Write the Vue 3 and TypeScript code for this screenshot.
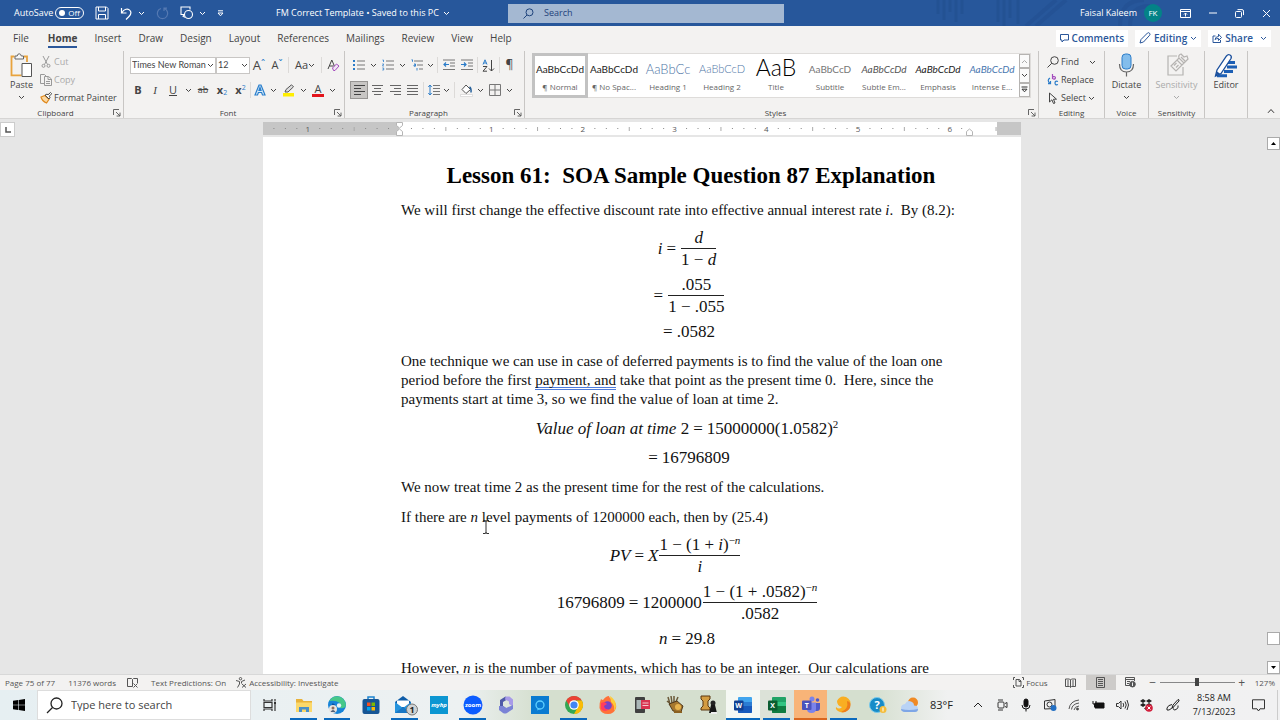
<script setup lang="ts">
import { h, ref } from 'vue'

const Chevron = () =>
  h('svg', { class: 'chev', width: 7, height: 5, viewBox: '0 0 7 5', fill: 'none', stroke: 'currentColor' }, [
    h('path', { d: 'M1 1l2.5 2.5L6 1' }),
  ])
const Launcher = () =>
  h('svg', { width: 8, height: 8, viewBox: '0 0 8 8', fill: 'none', stroke: '#555', 'stroke-width': 0.9 }, [
    h('path', { d: 'M.5 6V.5H6M3 3l4 4M7 3.6V7H3.6' }),
  ])

const tabs = ['File', 'Home', 'Insert', 'Draw', 'Design', 'Layout', 'References', 'Mailings', 'Review', 'View', 'Help']
const styles = [
  { sample: 'AaBbCcDd', name: '¶ Normal', kind: 'normal' },
  { sample: 'AaBbCcDd', name: '¶ No Spac...', kind: 'normal' },
  { sample: 'AaBbCc', name: 'Heading 1', kind: 'h1' },
  { sample: 'AaBbCcD', name: 'Heading 2', kind: 'h2' },
  { sample: 'AaB', name: 'Title', kind: 'title' },
  { sample: 'AaBbCcD', name: 'Subtitle', kind: 'sub' },
  { sample: 'AaBbCcDd', name: 'Subtle Em...', kind: 'subtle' },
  { sample: 'AaBbCcDd', name: 'Emphasis', kind: 'emph' },
  { sample: 'AaBbCcDd', name: 'Intense E...', kind: 'intense' },
]
const apps = [
  { id: 'taskview', label: 'Task View' },
  { id: 'explorer', label: 'File Explorer', run: true },
  { id: 'edge', label: 'Microsoft Edge', run: true },
  { id: 'store', label: 'Microsoft Store' },
  { id: 'mail', label: 'Mail', run: true },
  { id: 'hp', label: 'myHP' },
  { id: 'zoom', label: 'Zoom', run: true },
  { id: 'm365', label: 'Microsoft 365' },
  { id: 'alexa', label: 'Alexa' },
  { id: 'chrome', label: 'Chrome', run: true },
  { id: 'firefox', label: 'Firefox' },
  { id: 'phone', label: 'Phone' },
  { id: 'claw', label: 'Game' },
  { id: 'chess', label: 'Chess' },
  { id: 'word', label: 'Word', run: true },
  { id: 'excel', label: 'Excel', run: true },
  { id: 'teams', label: 'Teams', run: true },
  { id: 'swirl', label: 'Browser', run: true },
  { id: 'help', label: 'Get Help' },
]
const inch = 91.7
const origin = 136.5
const ticks: { x: number; kind: 'dot' | 'half' | 'num'; n: number }[] = []
for (let i = -11; i <= 52; i++) {
  if (i === 0 || i === 50 || i === 51) continue
  const kind = i % 8 === 0 ? 'num' : i % 4 === 0 ? 'half' : 'dot'
  ticks.push({ x: origin + (i * inch) / 8, kind, n: Math.abs(i / 8) })
}
const zoom = ref(50)
const find = ref('')
const query = ref('')
</script>

<template>
  <div class="app">
    <header class="titlebar">
      <svg class="art" width="240" height="26" viewBox="0 0 240 26" fill="none">
        <path d="M8 0v14M14 0v20M20 0v12M26 0v22M32 0v14M68 0v22M74 0v26M80 0v18M88 0v24" stroke="#1f4a88" stroke-width="3" opacity=".4" />
        <path d="M96 26l30-26M106 26l30-26M190 26q0-26 24-26M200 26q0-20 20-20" stroke="#1f4a88" stroke-width="4" opacity=".3" />
      </svg>
      <div class="quick">
        <label class="autosave">AutoSave
          <input type="checkbox" role="switch" /><span class="toggle"><i></i>Off</span>
        </label>
        <button aria-label="Save"><svg width="14" height="14" viewBox="0 0 14 14" fill="none" stroke="#fff"><path d="M1 1h10.5L13 2.500V13H1zM3.500 1v4h7V1M3.500 13V8.500h7V13" /></svg></button>
        <button aria-label="Undo" class="undo"><svg width="13" height="13" viewBox="0 0 13 13" fill="none" stroke="#fff" stroke-width="1.200"><path d="M1.500 1v5h5M1.800 5.800C4 2 8 1 10 3.500s1 4-1 6L6 12.500" /></svg><Chevron /></button>
        <button aria-label="Repeat" class="dim"><svg width="13" height="13" viewBox="0 0 13 13" fill="none" stroke="#5579b2" stroke-width="1.200"><path d="M5 1.500A5.200 5.200 0 1 0 8 1.500M8 4V1.200h3" /></svg></button>
        <button aria-label="Shapes" class="undo"><svg width="14" height="14" viewBox="0 0 14 14" fill="none" stroke="#fff" stroke-width="1.100"><path d="M4 8.500H1V1h9v2.500M4 8.500l-1 1.800 2 1" /><circle cx="8.500" cy="8.500" r="4" /></svg><Chevron /></button>
        <button aria-label="Customize toolbar"><svg width="7" height="7" viewBox="0 0 7 7" fill="none" stroke="#fff"><path d="M1 .8h5M1 3h5L3.500 5.800z" /></svg></button>
      </div>
      <button class="docname">FM Correct Template • Saved to this PC <Chevron /></button>
      <label class="tsearch">
        <svg width="11" height="11" viewBox="0 0 11 11" fill="none" stroke="#1f437c"><circle cx="6.500" cy="4.300" r="3.500" /><path d="M4 7L.5 10.500" /></svg>
        <input v-model="find" placeholder="Search" aria-label="Search document" />
      </label>
      <div class="account">
        <span>Faisal Kaleem</span><b class="avatar">FK</b>
        <button aria-label="Ribbon display options"><svg width="11" height="9" viewBox="0 0 11 9" fill="none" stroke="#fff"><path d="M.5.500h10v8H.500zM.5 2.500h10M5.500 7.500V4M4 5.500L5.500 4 7 5.500" /></svg></button>
        <button aria-label="Minimize"><svg width="8" height="8" viewBox="0 0 8 8" stroke="#fff"><path d="M0 4h8" /></svg></button>
        <button aria-label="Restore"><svg width="9" height="9" viewBox="0 0 9 9" fill="none" stroke="#fff"><rect x=".5" y="2.500" width="6" height="6" rx="1" /><path d="M2.500.6H7q1.500 0 1.500 1.500v4" /></svg></button>
        <button aria-label="Close"><svg width="9" height="9" viewBox="0 0 9 9" stroke="#fff"><path d="M1 1l7 7M8 1L1 8" /></svg></button>
      </div>
    </header>

    <nav class="tabs">
      <button v-for="t in tabs" :key="t" :class="{ on: t === 'Home' }">{{ t }}</button>
      <div class="actions">
        <button><svg width="9" height="9" viewBox="0 0 9 9" fill="none" stroke="#2b579a"><path d="M.5.500h8v5.500H4L2 8V6H.500z" /></svg>Comments</button>
        <button><svg width="12" height="12" viewBox="0 0 12 12" fill="none" stroke="#2b579a"><path d="M1 11l1-3.500L8.500 1q1-.8 2 .2t.2 2L4.500 10z" /></svg>Editing <Chevron /></button>
        <button><svg width="10" height="10" viewBox="0 0 10 10" fill="none" stroke="#2b579a"><path d="M3.500 3H1v6.500h7.500V7M3 6.500q.5-3 3.500-3V1.200L9.500 4.500l-3 3V5.500Q4.500 5.400 3 6.500z" /></svg>Share <i class="split"></i><Chevron /></button>
      </div>
    </nav>

    <section class="ribbon">
      <div class="group g-clip">
        <div class="body clip">
          <button class="big">
            <svg width="23" height="25" viewBox="0 0 23 25" fill="none"><path d="M4.500 3.500h-3v18.800h10" stroke="#e8a33d" stroke-width="1.800" /><path d="M14 3.500h3V9" stroke="#e8a33d" stroke-width="1.800" /><path d="M5 5V3h2.200Q7.500.8 9.200.8T11.300 3h2.200v3H5z" stroke="#666" fill="#f8f8f8" /><path d="M12 10.500h9.500v13H12z" stroke="#555" fill="#fff" /></svg>
            Paste<Chevron />
          </button>
          <div class="stack">
            <button class="off"><svg width="12" height="12" viewBox="0 0 12 12" fill="none" stroke="#999"><path d="M3 0l4.500 8.500M9 0L4.500 8.500" /><circle cx="3.500" cy="9.800" r="1.500" /><circle cx="8.500" cy="9.800" r="1.500" /></svg>Cut</button>
            <button class="off"><svg width="12" height="12" viewBox="0 0 12 12" fill="none" stroke="#999"><path d="M4 9.500H.500V.5h4L6 2M4.500 2.500h4L11.500 5v6.500h-7zM8 2.500V5.500h3M6 7.500h4M6 9.500h4" /></svg>Copy</button>
            <button><svg width="12" height="12" viewBox="0 0 12 12" fill="none"><path d="M1 5l4-1.500 4 3.800L6.500 11Q2 9 1 5z" fill="#fbd9a4" stroke="#e08a1e" stroke-width="1.200" /><path d="M5 3.200L7 2l1 .8L10.500.5l1.200 1.200L9.300 4.200l.8 1L9 7z" fill="#fff" stroke="#444" /></svg>Format Painter</button>
          </div>
        </div>
        <footer><span>Clipboard</span><button aria-label="Clipboard options"><Launcher /></button></footer>
      </div>

      <div class="group g-font">
        <div class="body rows">
          <div class="row f1">
            <span class="sel"><select aria-label="Font"><option>Times New Roman</option></select><Chevron /></span>
            <span class="sel"><select aria-label="Font size"><option>12</option></select><Chevron /></span>
            <button class="lg">A<sup class="blu">ˆ</sup></button>
            <button class="md">A<sup class="blu">ˇ</sup></button>
            <i class="sep"></i>
            <button class="md">Aa <Chevron /></button>
            <i class="sep"></i>
            <button aria-label="Clear formatting"><svg width="13" height="13" viewBox="0 0 13 13" fill="none"><path d="M1 10L4.800 1l3 7M2.400 7h4.200" stroke="#444" /><path d="M5.500 9l4-4 2.500 2-4 4.500H6.500z" fill="#f1e5f6" stroke="#a44bbd" /></svg></button>
          </div>
          <div class="row f2">
            <button class="md"><b>B</b></button><button class="md ser"><i>I</i></button><button class="md"><u>U</u></button><button aria-label="Underline styles"><Chevron /></button>
            <button><s>ab</s></button><button class="md"><b>x</b><sub class="blu">2</sub></button><button class="md"><b>x</b><sup class="blu">2</sup></button><i class="sep"></i>
            <button aria-label="Text effects"><svg width="12" height="12" viewBox="0 0 12 12" fill="none" stroke="#2a7fcc"><path d="M1 11L5 1h2l4 10H8.500L7.600 8.500H4.400L3.500 11zM5 6.500h2L6 3.500z" fill="#d6eaf9" stroke-width="1.200" /></svg></button><button aria-label="Effects menu"><Chevron /></button>
            <button aria-label="Highlight"><svg width="13" height="13" viewBox="0 0 13 13"><path d="M3 8l1-2.500L9.500.8l2 2L6 8z" fill="#ddd" stroke="#555" /><path d="M1 9h11v3.500H1z" fill="#ffee00" /></svg></button><button aria-label="Highlight colors"><Chevron /></button>
            <button class="md fontcolor">A</button><button aria-label="Font colors"><Chevron /></button>
          </div>
        </div>
        <footer><span>Font</span><button aria-label="Font options"><Launcher /></button></footer>
      </div>

      <div class="group g-para">
        <div class="body rows">
          <div class="row p1">
            <button aria-label="Bullets"><svg width="12" height="12" viewBox="0 0 12 12"><path d="M4 2h8M4 6h8M4 10h8" stroke="#777" /><path d="M0 2h2M0 6h2M0 10h2" stroke="#2b7cc9" stroke-width="2" /></svg></button><button aria-label="Bullet library"><Chevron /></button>
            <button aria-label="Numbering"><svg width="12" height="12" viewBox="0 0 12 12" fill="none"><path d="M4 2h8M4 6h8M4 10h8" stroke="#777" /><path d="M.5 1h1v2M.3 5h1.400L.5 7h1.300M.3 9h1.400v2H.3" stroke="#2b7cc9" stroke-width=".8" /></svg></button><button aria-label="Number library"><Chevron /></button>
            <button aria-label="Multilevel list"><svg width="12" height="12" viewBox="0 0 12 12" fill="none"><path d="M3 2h9M6 6h6M8 10h4" stroke="#777" /><path d="M.5.800h1v2M3 5h1.500v2.200H3V6h1.500M6 9v2.500" stroke="#2b7cc9" stroke-width=".9" /></svg></button><button aria-label="List library"><Chevron /></button>
            <i class="sep"></i>
            <button aria-label="Decrease indent"><svg width="12" height="12" viewBox="0 0 12 12" fill="none"><path d="M0 1h12M7 4h5M7 7h5M0 10.500h12" stroke="#777" /><path d="M6 5.500H1M3 3.500l-2 2 2 2" stroke="#2b7cc9" stroke-width="1.200" /></svg></button>
            <button aria-label="Increase indent"><svg width="12" height="12" viewBox="0 0 12 12" fill="none"><path d="M0 1h12M7 4h5M7 7h5M0 10.500h12" stroke="#777" /><path d="M0 5.500h5M3 3.500l2 2-2 2" stroke="#2b7cc9" stroke-width="1.200" /></svg></button>
            <i class="sep"></i>
            <button aria-label="Sort"><svg width="13" height="13" viewBox="0 0 13 13" fill="none"><path d="M1 5.500L3 .8l2 4.700M1.700 4h2.600" stroke="#2b7cc9" /><path d="M1 7.500h4l-4 4.700h4M9.500 1v11M7 9.500l2.500 2.500L12 9.500" stroke="#444" /></svg></button>
            <i class="sep"></i>
            <button class="pil">¶</button>
          </div>
          <div class="row p2">
            <button aria-label="Align left" class="picked"><svg width="11" height="12" viewBox="0 0 11 12" stroke="#444"><path d="M0 1.500h11M0 4.500h7M0 7.500h11M0 10.500h7" /></svg></button>
            <button aria-label="Center"><svg width="11" height="12" viewBox="0 0 11 12" stroke="#666"><path d="M0 1.500h11M2 4.500h7M0 7.500h11M2 10.500h7" /></svg></button>
            <button aria-label="Align right"><svg width="11" height="12" viewBox="0 0 11 12" stroke="#666"><path d="M0 1.500h11M4 4.500h7M0 7.500h11M4 10.500h7" /></svg></button>
            <button aria-label="Justify"><svg width="11" height="12" viewBox="0 0 11 12" stroke="#666"><path d="M0 1.500h11M0 4.500h11M0 7.500h11M0 10.500h11" /></svg></button>
            <i class="sep"></i>
            <button aria-label="Line spacing"><svg width="12" height="12" viewBox="0 0 12 12" fill="none"><path d="M5 1.500h7M5 4.500h7M5 7.500h7M5 10.500h7" stroke="#777" /><path d="M2 1v10M.3 3L2 1l1.700 2M.3 9L2 11l1.700-2" stroke="#2b7cc9" /></svg></button><button aria-label="Spacing menu"><Chevron /></button>
            <i class="sep"></i>
            <button aria-label="Shading"><svg width="13" height="13" viewBox="0 0 13 13" fill="none"><path d="M2 5.500L6 1l4.500 4.500L6 9.500z" fill="#fff" stroke="#555" /><path d="M9.500 3q2 1 1.500 5.500" stroke="#26619c" stroke-width="1.500" /><path d="M.5 10.500h12v2H.500z" fill="#fff" stroke="#ccc" stroke-width=".6" /></svg></button><button aria-label="Shading colors"><Chevron /></button>
            <button aria-label="Borders"><svg width="12" height="12" viewBox="0 0 12 12" fill="none" stroke="#777"><path d="M.5.500h11v11H.500zM6 .5v11M.5 6h11" /></svg></button><button aria-label="Border menu"><Chevron /></button>
          </div>
        </div>
        <footer><span>Paragraph</span><button aria-label="Paragraph options"><Launcher /></button></footer>
      </div>

      <div class="group g-styles">
        <div class="body gal">
          <button v-for="(s, i) in styles" :key="s.name" class="style" :class="{ cur: i === 0 }"><span class="sample" :class="s.kind">{{ s.sample }}</span><small>{{ s.name }}</small></button>
          <div class="scr">
            <button aria-label="Scroll styles up" class="up"><svg width="7" height="5" viewBox="0 0 7 5" fill="none" stroke="currentColor"><path d="M1 4l2.500-2.500L6 4" /></svg></button><button aria-label="Scroll styles down"><Chevron /></button>
            <button aria-label="More styles"><svg width="7" height="7" viewBox="0 0 7 7" fill="none" stroke="#333"><path d="M.5 1h6M1 3.200h5L3.500 5.800z" /></svg></button>
          </div>
        </div>
        <footer><span>Styles</span><button aria-label="Styles options"><Launcher /></button></footer>
      </div>

      <div class="group g-edit">
        <div class="body stack">
          <button><svg width="12" height="12" viewBox="0 0 12 12" fill="none" stroke="#444"><circle cx="7.500" cy="4.500" r="3.800" /><path d="M4.800 7.200L.5 11.500" /></svg>Find<Chevron class="wide" /></button>
          <button><svg width="12" height="12" viewBox="0 0 12 12" fill="none" stroke-width="1.200"><path d="M5.500 0v5M5.500 3.500a1.500 1.300 0 1 1 0 .6" stroke="#a44bbd" /><path d="M3 4Q-.5 6 3 9.500M3.500 7v2.700H1M11 7.500q-3-1-3 1.500t3 1.500" stroke="#2b7cc9" /></svg>Replace</button>
          <button><svg width="12" height="12" viewBox="0 0 12 12" fill="none" stroke="#444"><path d="M2.500 1v9l2.400-2.200L6.500 11.500 8 11 6.500 7.200H9.500z" /></svg>Select<Chevron /></button>
        </div>
        <footer><span>Editing</span></footer>
      </div>
      <div class="group g-voice">
        <div class="body"><button class="big">
          <svg width="17" height="25" viewBox="0 0 17 25" fill="none"><rect x="4" y="1" width="9" height="15" rx="3.500" fill="#83bdec" stroke="#2b7cc9" /><path d="M1.500 11q0 8 7 8t7-8M8.500 19v4.500" stroke="#666" stroke-width="1.200" /></svg>
          Dictate<Chevron /></button></div>
        <footer><span>Voice</span></footer>
      </div>
      <div class="group g-sens">
        <div class="body"><button class="big off">
          <svg width="24" height="25" viewBox="0 0 24 25" fill="none" stroke="#b5b3b1" stroke-width="1.200"><path d="M12 3H3v19h15v-8" /><path d="M6 13l6-6 5 5-6 6zM9 12.500l2.500-2.500M11 14.500l2.500-2.500M12 7l2-2 5 5-2 2M14 5q-1-3 2-4l3 3 3-1 1 3-4 4M16 4l4 4" /></svg>
          Sensitivity<Chevron /></button></div>
        <footer><span>Sensitivity</span></footer>
      </div>
      <div class="group g-ed">
        <div class="body"><button class="big">
          <svg width="24" height="25" viewBox="0 0 24 25" fill="none"><path d="M12.500 9.500H21M13 14h10M10 18.500h9M3 22.800h10" stroke="#1d5fb4" stroke-width="3" /><path d="M1.500 23l1.500-6L12.500 3q1.500-2 3.500-1t1 3.500L7 20.500z" fill="#fff" stroke="#1a4f9c" stroke-width="1.300" /><path d="M1.500 23l1.300-4.500L6 20.500z" fill="#1a4f9c" /></svg>
          Editor</button></div>
        <footer></footer>
      </div>
      <button class="collapse" aria-label="Collapse ribbon"><svg width="8" height="6" viewBox="0 0 8 6" fill="none" stroke="#333"><path d="M1 4.800L4 1.500l3 3.300" /></svg></button>
    </section>

    <main class="work">
      <button class="tabstop" aria-label="Tab selector"><svg width="6" height="6" viewBox="0 0 6 6" fill="none" stroke="#555" stroke-width="1.500"><path d="M1 0v5h5" /></svg></button>
      <div class="sheet">
        <svg class="ruler" width="758" height="14" viewBox="0 0 758 14">
          <rect width="758" height="13" fill="#c6c6c6" /><rect x="136" width="598" height="13" fill="#fff" />
          <template v-for="t in ticks" :key="t.x">
            <text v-if="t.kind === 'num'" :x="t.x" y="10" text-anchor="middle">{{ t.n }}</text>
            <rect v-else-if="t.kind === 'half'" :x="t.x" y="5" width="1" height="4" fill="#aaa" />
            <rect v-else :x="t.x" y="6" width="1" height="1" fill="#888" />
          </template>
          <path d="M133.500.500h6v3l-3 2.500-3-2.500zM133.500 13.500v-4l3-2.500 3 2.500v4zM703.500 13.500v-4l3-2.500 3 2.500v4z" fill="#fff" stroke="#b5b5b5" />
        </svg>
        <article class="page">
          <h1>Lesson 61:&nbsp; SOA Sample Question 87 Explanation</h1>
          <p>We will first change the effective discount rate into effective annual interest rate <em>i</em>.&nbsp; By (8.2):</p>
          <div class="eq tall"><em>i</em><span class="op">=</span><span class="frac"><span><em>d</em></span><span>1 − <em>d</em></span></span></div>
          <div class="eq tall next"><span class="op">=</span><span class="frac"><span>.055</span><span>1 − .055</span></span></div>
          <div class="eq last"><span class="op">=</span>.0582</div>
          <p>One technique we can use in case of deferred payments is to find the value of the loan one<br />period before the first <span class="gram">payment, and</span> take that point as the present time 0.&nbsp; Here, since the<br />payments start at time 3, so we find the value of loan at time 2.</p>
          <div class="eq"><em>Value of loan at time</em>&nbsp;2<span class="op">=</span>15000000(1.0582)<sup>2</sup></div>
          <div class="eq"><span class="op">=</span>16796809</div>
          <p>We now treat time 2 as the present time for the rest of the calculations.</p>
          <p class="hover">If there are <em>n</em> level payments of 1200000 each, then by (25.4)
            <svg class="ibeam" width="8" height="14" viewBox="0 0 8 14" fill="none" stroke="#333"><path d="M1 .5h2q1 0 1 1 0-1 1-1h2M4 1v12M1 13.500h2q1 0 1-1 0 1 1 1h2" /></svg></p>
          <div class="eq tall lead"><em>PV</em><span class="op">=</span><em>X</em><span class="frac"><span>1 − (1 + <em>i</em>)<sup>−<em>n</em></sup></span><span><em>i</em></span></span></div>
          <div class="eq tall next">16796809<span class="op">=</span>1200000<span class="frac"><span>1 − (1 + .0582)<sup>−<em>n</em></sup></span><span>.0582</span></span></div>
          <div class="eq last"><em>n</em><span class="op">=</span>29.8</div>
          <p>However, <em>n</em> is the number of payments, which has to be an integer.&nbsp; Our calculations are</p>
        </article>
      </div>
      <div class="vscroll">
        <button aria-label="Scroll up"><svg width="5" height="3" viewBox="0 0 5 3"><path d="M0 3h5L2.500 0z" /></svg></button>
        <i class="thumb"></i>
        <button aria-label="Scroll down"><svg width="5" height="3" viewBox="0 0 5 3"><path d="M0 0h5L2.500 3z" /></svg></button>
      </div>
    </main>

    <div class="status">
      <button class="s-page">Page 75 of 77</button>
      <button class="s-words">11376 words</button>
      <button class="s-proof" aria-label="Proofing"><svg width="11" height="10" viewBox="0 0 11 10" fill="none" stroke="#555"><path d="M5.500 8.500H.500V.5h4l1 1v7M5.500 1.500l1-1h4V5M6.500 5.500l4 4M10.500 5.500l-4 4" /></svg></button>
      <button class="s-pred">Text Predictions: On</button>
      <button><svg width="11" height="11" viewBox="0 0 11 11" fill="none" stroke="#555"><circle cx="4.500" cy="1.700" r="1.200" /><path d="M0 3.500l3.500 1V7L1.500 10.500M9 3l-3.500 1.500v2M6 7l4 3.500M10 7l-4 3.500" /></svg>Accessibility: Investigate</button>
      <div class="right">
        <button><svg width="11" height="11" viewBox="0 0 11 11" fill="none" stroke="#555"><path d="M2 .5H.5V3M9 .5h1.500V3M2 10.500H.500V8M9 10.500h1.500V8M3 2.500h3.500L8 4v5H3zM6 2.500V4.500h2" /></svg>Focus</button>
        <button class="view" aria-label="Read mode"><svg width="11" height="10" viewBox="0 0 11 10" fill="none" stroke="#555"><path d="M.5 1h4l1 1 1-1h4v7.500H6.500l-1 1-1-1h-4zM5.500 2v7M2 3h2M2 5h2M2 7h2M7 3h2M7 5h2M7 7h2" /></svg></button>
        <button class="view picked" aria-label="Print layout"><svg width="9" height="11" viewBox="0 0 9 11" fill="none" stroke="#555"><path d="M.5.500h8v10h-8zM2 2.500h5M2 4.500h5M2 6.500h5M2 8.500h5" /></svg></button>
        <button class="view" aria-label="Web layout"><svg width="11" height="11" viewBox="0 0 11 11" fill="none" stroke="#555"><path d="M5 8.500H.500v-8h9V4M.5 2.500h9M2 4.500h3M2 6.500h2" /><circle cx="7.500" cy="7.200" r="2.800" fill="#555" /><path d="M7.500 5.500v3.500" stroke="#eee" /></svg></button>
        <button class="pm" aria-label="Zoom out">−</button>
        <input v-model="zoom" type="range" min="0" max="100" aria-label="Zoom" />
        <button class="pm" aria-label="Zoom in">+</button>
        <button class="pct">127%</button>
      </div>
    </div>

    <div class="taskbar">
      <button class="start" aria-label="Start"><svg width="12" height="12" viewBox="0 0 12 12"><path d="M0 1.700L5.200 1v4.700H0zM5.800.9L12 0v5.700H5.800zM0 6.300h5.200V11L0 10.300zM5.800 6.300H12V12l-6.200-.9z" /></svg></button>
      <label class="bsearch"><svg width="17" height="17" viewBox="0 0 17 17" fill="none" stroke="#222" stroke-width="1.300"><circle cx="10.500" cy="6.500" r="5.500" /><path d="M6.500 10.500L1 16" /></svg><input v-model="query" placeholder="Type here to search" aria-label="Type here to search" /></label>
      <div class="apps">
        <button v-for="a in apps" :key="a.id" :aria-label="a.label" :class="[a.id, { run: a.run }]">
          <svg width="20" height="20" viewBox="0 0 20 20" fill="none">
            <g v-if="a.id === 'taskview'" stroke="#333" stroke-width="1.200"><path d="M4 4v2h8V4M4 16v-2h8v2M4 7.500h8v5H4zM15 4v2.500M15 9v7" /><path d="M14 8h2" stroke-width="2" /></g>
            <g v-else-if="a.id === 'explorer'"><path d="M2 4h6l1.500 2H18v11H2z" fill="#e9b23a" /><path d="M2 7.500h16V17H2z" fill="#fbd86b" /><path d="M5 17v-5h10v5h-3v-2.500H8V17z" fill="#4a8fc9" /></g>
            <g v-else-if="a.id === 'edge'"><circle cx="10" cy="10" r="9" fill="#1683d8" /><path d="M2 6Q6 0 12 1.500T19 10q-1 4-6 3 2-3-1-5.500T2 6z" fill="#46c88a" /><path d="M7 9q-3 4 1 8" stroke="#0c4f9e" stroke-width="3" /><circle cx="12" cy="10.500" r="2.200" fill="#e5f5f5" /><circle cx="6" cy="14" r="4" fill="#e9e4df" /><circle cx="6" cy="13" r="1.500" fill="#8c6d5d" /><path d="M3.500 17q2.500-4 5 0" fill="#526078" /></g>
            <g v-else-if="a.id === 'store'"><path d="M7 4V2h6v2" stroke="#1b82cf" stroke-width="1.500" /><rect x="1.500" y="4" width="17" height="15" rx="2" fill="#155595" /><path d="M6 7.500h3.500V11H6z" fill="#f25022" /><path d="M10.500 7.500H14V11h-3.500z" fill="#7fba00" /><path d="M6 12h3.500v3.500H6z" fill="#00a4ef" /><path d="M10.500 12H14v3.500h-3.500z" fill="#ffb900" /></g>
            <g v-else-if="a.id === 'mail'"><path d="M0 7l8-6 8 6v11H0z" fill="#0d5ca8" /><path d="M2 5.500h12V12H2z" fill="#fff" /><path d="M0 7l8 6 8-6v11H0z" fill="#2593dd" /><path d="M0 18l8-6 8 6z" fill="#1877c5" /><circle cx="17" cy="14.500" r="5.500" fill="#cfd3d5" stroke="#777" /><text x="17" y="18" text-anchor="middle" class="t9">1</text></g>
            <g v-else-if="a.id === 'hp'"><path d="M1 1h18v18H1z" fill="#0b96d2" /><text x="10" y="12" text-anchor="middle" class="t6 w it">myhp</text></g>
            <g v-else-if="a.id === 'zoom'"><circle cx="10" cy="10" r="9.500" fill="#0b5cff" /><text x="10" y="12" text-anchor="middle" class="t6 w">zoom</text></g>
            <g v-else-if="a.id === 'm365'"><path d="M9.500 1.500L4 5v7l5.500 3.500v-3L7 11V7l5-3z" fill="#4f5aa8" /><path d="M9.500 1.500h4L17 4.500v7L13 9V6.500L9 4.500z" fill="#a89be8" /><path d="M3 11l4 0 3 2 7-3v4l-6 4q-2 1-4 0l-4-3z" fill="#7b83d6" /></g>
            <g v-else-if="a.id === 'alexa'"><path d="M1 1h18v18H1z" fill="#0a7bd1" /><circle cx="10" cy="10" r="4" stroke="#5fd0ff" stroke-width="1.300" /><path d="M8 13l-1 2.500 3-1.500z" fill="#5fd0ff" /></g>
            <g v-else-if="a.id === 'chrome'"><circle cx="10" cy="10" r="9" fill="#34a853" /><path d="M2.200 5.500a9 9 0 0 1 15.600 0H10L6 12z" fill="#ea4335" /><path d="M17.800 5.500A9 9 0 0 1 10 19l4-7-1-6.500z" fill="#fbbc05" /><circle cx="10" cy="10" r="4.800" fill="#fff" /><circle cx="10" cy="10" r="3.600" fill="#4285f4" /></g>
            <g v-else-if="a.id === 'firefox'"><path d="M3 4q1 1 2 1 3-4 6-4 0 2 4 4 4 4 3 8-2 6-8 6-7 0-8.500-6Q1 8 3 4z" fill="#ff7139" /><path d="M12 1q6 4 6 10 0 3-2 5 1-6-3-9z" fill="#ffcb37" /><circle cx="9.500" cy="10.500" r="4.300" fill="#7542c9" /><path d="M3 8q4-2 6 1l-3 2q1 4 5 3-4 4-8 0z" fill="#ff3d5f" /></g>
            <g v-else-if="a.id === 'phone'"><rect x="3" y="2" width="10" height="16" rx="1" fill="#404040" /><path d="M4.500 5H11v9H4.500z" fill="#aab7b7" /><path d="M9 5h9v9H9z" fill="#d8344f" /><path d="M10.500 8h6M10.500 10.500h6" stroke="#f6c5cd" /></g>
            <g v-else-if="a.id === 'claw'"><path d="M3 2l2 7M6 1l1 7M9 1v7M13 2l-3 7M2 6l6 5" stroke="#6b5a3a" stroke-width="1.500" /><path d="M4 9l8-3 6 5-2 6-8-1z" fill="#a5772f" stroke="#38230c" stroke-width=".8" /><circle cx="13" cy="12" r="3" fill="#e7b34d" /><path d="M9 16h8v2H9z" fill="#8a6020" /></g>
            <g v-else-if="a.id === 'chess'"><path d="M2 1h9v3L9 6v5l2 2v2H2v-2l2-2V6L2 4z" fill="#d49d43" stroke="#5a3710" /><circle cx="14" cy="8" r="2.500" fill="#222" /><path d="M12 10h4l2 8h-8z" fill="#171717" /><path d="M12 17h6v2h-6z" fill="#eee" /></g>
            <g v-else-if="a.id === 'word' || a.id === 'excel'"><rect x="5" y="2" width="14" height="16" rx="1" :fill="a.id === 'word' ? '#41a5ee' : '#21a366'" /><path d="M5 7h14v4H5z" :fill="a.id === 'word' ? '#2b7cd3' : '#33c481'" /><path d="M5 11h14v6q0 1-1 1H6q-1 0-1-1z" :fill="a.id === 'word' ? '#185abd' : '#107c41'" /><rect x="1" y="5.500" width="9.500" height="10" rx="1" :fill="a.id === 'word' ? '#103f91' : '#0b5c30'" /><text x="5.700" y="13" text-anchor="middle" class="t7 w">{{ a.id === 'word' ? 'W' : 'X' }}</text></g>
            <g v-else-if="a.id === 'teams'"><circle cx="11" cy="4" r="2.500" fill="#7b83eb" /><circle cx="16.500" cy="5" r="1.800" fill="#5059c9" /><path d="M13 8h6v5q0 3-3 3h-3z" fill="#5059c9" /><path d="M6 7.500h9V14q0 4-4.500 4T6 14z" fill="#7b83eb" /><rect x="1" y="5.500" width="9.500" height="9.500" rx="1" fill="#4b53bc" /><text x="5.700" y="13" text-anchor="middle" class="t7 w">T</text></g>
            <g v-else-if="a.id === 'swirl'"><path d="M3 6q3-6 9-4 6 3 4 9-3 8-10 6Q1 15 2 12q3 3 6 0-5-1-5-6z" fill="#f9ae22" /><path d="M13 6q5 1 3 7-3 5-9 4 8-3 6-11z" fill="#ee7d1b" /></g>
            <g v-else><circle cx="9" cy="10" r="7.500" fill="#168bc8" stroke="#79c9ea" /><text x="9" y="14" text-anchor="middle" class="t11 w">?</text><circle cx="15" cy="14.500" r="3.500" fill="#f5bd3b" /><path d="M15 12.500v4" stroke="#fff" /></g>
          </svg>
        </button>
      </div>
      <button class="weather"><svg width="20" height="16" viewBox="0 0 20 16"><circle cx="13" cy="5.500" r="5" fill="#f08a24" /><path d="M5 15q-4-.5-4-4t4-4q2-4 6-2.500 3 1 3 4 4 0 4 3t-3 3.500z" fill="#b9d3f5" /><path d="M5 15q-4-.5-4-3 8 2 17 0 0 3-3 3z" fill="#7ea6e6" /></svg>83°F</button>
      <div class="tray">
        <button aria-label="Hidden icons"><svg width="10" height="6" viewBox="0 0 10 6" fill="none" stroke="#222"><path d="M1 5l4-4 4 4" /></svg></button>
        <button aria-label="Camera"><svg width="12" height="12" viewBox="0 0 12 12" fill="none" stroke="#333"><rect x="2" y="3" width="6" height="6" rx="1" /><path d="M9 4.500l2-1v5l-2-1M2 1h5M2 11h5" /></svg></button>
        <button aria-label="Microphone"><svg width="10" height="14" viewBox="0 0 10 14" fill="none" stroke="#111"><rect x="3" y="1" width="4" height="8" rx="2" fill="#111" /><path d="M1 7q0 4 4 4t4-4M5 11v2.500" /></svg></button>
        <button aria-label="Sync"><svg width="14" height="14" viewBox="0 0 14 14" fill="none" stroke="#333"><path d="M1.500 3L12 1.500v9L1.500 11z" /><circle cx="6.500" cy="6.500" r="2.500" /><circle cx="10.500" cy="10" r="3" fill="#236fc3" stroke="none" /></svg></button>
        <button aria-label="Network"><svg width="12" height="12" viewBox="0 0 12 12" fill="none" stroke="#555"><path d="M1 10Q2 2 11 1M3.500 10.500Q4 5 11 4M6 11q.5-3.500 5-4" /><circle cx="9.500" cy="10" r="1" fill="#333" /></svg></button>
        <button aria-label="Battery"><svg width="13" height="10" viewBox="0 0 13 10" fill="none" stroke="#111"><path d="M3 3h9v5H3z" fill="#111" /><path d="M1 1v3h3V1M2.500 4v3" /></svg></button>
        <button aria-label="Volume"><svg width="13" height="12" viewBox="0 0 13 12" fill="none" stroke="#333"><path d="M.5 4.500h2L5 2v8L2.500 7.500h-2zM7 4q1.500 2 0 4M9 2.500q2.500 3.500 0 7M11 1q3 5 0 10" /></svg></button>
        <button aria-label="Dropbox"><svg width="13" height="13" viewBox="0 0 13 13"><path d="M3 0l3 2-3 2-3-2zM9 0l3 2-3 2-3-2zM3 4l3 2-3 2-3-2zM9 4l3 2-3 2-3-2zM6 8l2 1.500L6 11 4 9.500z" fill="#222" /><circle cx="9" cy="9" r="3.800" fill="#d21f3c" /><path d="M7.500 7.500l3 3M10.500 7.500l-3 3" stroke="#fff" /></svg></button>
        <button aria-label="Pen" class="pen"><svg width="14" height="14" viewBox="0 0 14 14" fill="none" stroke="#222"><path d="M7 7l5-5.500q1.500 0 1 1.500L7.500 9 6 9.500zM6 6.500Q2 7 1 10t2 2q2-1 4-3M7 9q0 4 3 2.500t2-4" /></svg></button>
      </div>
      <button class="clock"><span>8:58 AM</span><span>7/13/2023</span></button>
      <button class="note" aria-label="Notifications"><svg width="13" height="13" viewBox="0 0 13 13" fill="none" stroke="#333"><path d="M.5.800h12v9H8L6.500 12 5 9.800H.500z" /></svg></button>
    </div>
  </div>
</template>

<style>
body { overflow: hidden; }
</style>

<style scoped>
.app { height: 100vh; display: flex; flex-direction: column; font: 10px/12px "Open Sans", "Noto Sans", sans-serif; color: #444; background: #e6e6e6; overflow: hidden; }
.app * { box-sizing: border-box; }
button { font: inherit; color: inherit; background: none; border: 0; padding: 0; display: flex; align-items: center; justify-content: center; white-space: nowrap; }
input, select { font: inherit; color: inherit; border: 0; outline: 0; background: none; padding: 0; min-width: 0; }
svg { flex: none; display: block; }
.titlebar { position: relative; flex: none; height: 26px; background: #27579b; color: #fff; display: grid; grid-template-columns: 276fr 204px 24fr 280px 189fr 307px; align-items: center; }
.art { position: absolute; right: 110px; top: 0; }
.quick { display: flex; align-items: center; padding-left: 14px; gap: 11px; }
.autosave { display: flex; align-items: center; gap: 2px; font-size: 9px; }
.autosave input { position: absolute; opacity: 0; }
.toggle { display: flex; align-items: center; gap: 3px; width: 29px; height: 12px; border: 1px solid #fff; border-radius: 6px; padding-left: 3px; font-size: 8px; line-height: 10px; }
.toggle i { width: 6px; height: 6px; border-radius: 50%; background: #fff; }
.undo { gap: 5px; }
.docname { justify-content: flex-start; gap: 4px; font-size: 9px; }
.tsearch { grid-column: 4; display: flex; align-items: center; gap: 10px; height: 19px; margin-left: 4px; padding-left: 15px; background: #a4b8d2; color: #1f437c; font-size: 9px; }
input::placeholder { color: inherit; opacity: 1; }
.account { grid-column: 6; position: relative; display: flex; align-items: center; justify-content: flex-end; gap: 18px; padding-right: 9px; font-size: 9px; }
.avatar { width: 18px; height: 18px; margin-left: -11px; border-radius: 50%; background: #038387; font: 8px/18px "Open Sans", sans-serif; text-align: center; }
.tabs { flex: none; height: 24px; background: #f3f2f1; display: flex; align-items: center; padding-left: 13px; gap: 17px; }
.tabs > button { height: 20px; border-top: 2px solid transparent; border-bottom: 2px solid transparent; }
.tabs > .on { font-weight: 700; border-bottom-color: #2b579a; margin-left: 2px; }
.actions { margin-left: auto; display: flex; gap: 7px; padding-right: 9px; color: #2b579a; font-weight: 600; }
.actions button { height: 17px; background: #fff; padding: 0 4px; gap: 3px; }
.split { width: 1px; }
.ribbon { flex: none; height: 69px; background: #f3f2f1; display: flex; border-bottom: 1px solid #d6d5d4; font-size: 9px; }
.group { display: flex; flex-direction: column; border-right: 1px solid #c8c6c4; margin: 1px 0 0; padding-top: 2px; }
.group footer { display: flex; height: 12px; margin-top: auto; font-size: 8px; line-height: 14px; }
.group footer span { flex: 1; text-align: center; }
.group footer button { width: 12px; height: 14px; }
.body { height: 48px; }
.g-clip { width: 124px; } .g-font { width: 221px; } .g-para { width: 180px; } .g-styles { flex: 1; min-width: 514px; } .g-edit { width: 66px; } .g-voice { width: 44px; } .g-sens { width: 56px; } .g-ed { width: 43px; }
.clip { display: flex; padding-left: 8px; gap: 5px; }
.big { width: 100%; flex-direction: column; justify-content: flex-start; gap: 1px; }
.clip .big { width: 27px; }
.big .chev { margin-top: 3px; }
.stack { display: flex; flex-direction: column; }
.stack button { height: 18px; justify-content: flex-start; gap: 2px; flex: none; }
.off { color: #aaa; }
.rows { padding: 3px 0 0 6px; display: flex; flex-direction: column; gap: 7px; }
.row { display: grid; height: 18px; align-items: center; justify-items: center; }
.f1 { grid-template-columns: 86px 34px 18px 18px 5px 28px 4px 20px; }
.f2 { grid-template-columns: 16px 18px 18px 12px 18px 20px 17px 3px 16px 11px 18px 12px 18px 11px; }
.p1 { grid-template-columns: 17px 12px 18px 11px 18px 8px 6px 18px 17px 4px 18px 4px 17px; }
.p2 { grid-template-columns: 18px 18px 18px 17px 4px 17px 9px 6px 18px 11px 17px 12px; }
.p1, .p2 { margin-left: -1px; }
.sep { width: 1px; height: 16px; background: #dcdad8; }
.sel { display: flex; align-items: center; width: 100%; height: 17px; background: #fff; border: 1px solid #c8c6c4; padding: 0 1px; font-family: Lato, "Open Sans", sans-serif; }
.sel select { flex: 1; appearance: none; }
.lg { font-size: 13px; } .md { font-size: 11px; }
.blu { color: #2b7cc9; font-size: 7px; line-height: 7px; }
.f1 .blu { font-size: 10px; line-height: 10px; }
sup.blu { align-self: flex-start; } sub.blu { align-self: flex-end; }
.ser { font-family: "Liberation Serif", serif; }
.fontcolor { border-bottom: 3px solid #e3141b; width: 12px; line-height: 10px; }
.pil { font-size: 12px; }
.row .picked { width: 18px; height: 18px; background: #c8c6c4; border: 1px solid #979593; }
.gal { display: flex; margin: 0 7px; height: 45px; background: #fff; border: 1px solid #dedcda; }
.style { flex: 1; height: 43px; flex-direction: column; justify-content: flex-start; min-width: 0; }
.style.cur { outline: 3px solid #c2c2c2; outline-offset: -2px; }
.style small { font-size: 8px; line-height: 10px; color: #666; margin-top: 2px; }
.sample { height: 26px; line-height: 30px; font-family: Lato, "Open Sans", sans-serif; font-size: 10px; color: #222; }
.sample.h1 { font-size: 13px; color: #4f76a6; font-weight: 300; } .sample.h2 { font-size: 11px; color: #4f76a6; font-weight: 300; }
.sample.title { font-size: 23px; line-height: 26px; font-weight: 300; color: #000; }
.sample.sub { color: #767676; }
.subtle, .emph, .intense { font-style: italic; } .sample.subtle { color: #555; } .sample.intense { color: #4a78b0; }
.scr { width: 11px; display: flex; flex-direction: column; }
.scr button { flex: 1; border: 1px solid #b5b3b1; background: #fafafa; }
.scr .up { color: #aaa; }
.g-edit .stack { padding: 0 0 0 8px; }
.g-edit button { gap: 2px; }
.wide { margin-left: 8px; }
.collapse { width: 32px; align-self: flex-end; height: 14px; padding-left: 14px; }
.work { flex: 1; min-height: 0; display: grid; grid-template-columns: 263fr 758px 246fr 13px; background: #e6e6e6; overflow: hidden; }
.tabstop { width: 15px; height: 15px; margin-top: 3px; background: #fff; border: 1px solid #ccc; }
.sheet { padding-top: 3px; min-height: 0; display: flex; flex-direction: column; }
.ruler { font-size: 8px; fill: #555; overflow: visible; }
.page { flex: 1; margin-top: 1px; background: #fff; padding: 25px 48px 0 138px; font: 15px/19px "Liberation Serif", "Times New Roman", serif; color: #111; min-height: 0; }
h1 { margin: 0 0 0 8px; font-size: 23px; line-height: 28px; text-align: center; white-space: nowrap; color: #000; }
p { margin: 11px 0 0; white-space: nowrap; }
.eq { display: flex; justify-content: center; align-items: center; font-size: 17px; height: 19px; margin-top: 10px; white-space: nowrap; }
.eq.tall { height: 45px; margin-top: 6px; }
.eq.next { margin-top: 2px; } .eq.last { margin-top: 4px; }
.eq.lead { padding-right: 24px; }
.op { margin: 0 4px; }
.frac { display: flex; flex-direction: column; text-align: center; line-height: 22px; margin-left: 1px; }
.frac > span { height: 22px; }
.frac > span:first-child { border-bottom: 1px solid #222; }
.eq sup { font-size: 11px; line-height: 0; vertical-align: 6px; }
.eq > sup { line-height: 11px; align-self: flex-start; }
.gram { border-bottom: 3px double #4f7ddc; display: inline-block; line-height: 15px; height: 17px; }
.hover { position: relative; }
.ibeam { position: absolute; left: 81px; top: 12px; }
.vscroll { grid-column: 4; display: flex; flex-direction: column; padding-top: 18px; }
.vscroll button, .thumb { height: 13px; background: #fff; border: 1px solid #aaa; }
.thumb { margin: auto 0 16px; }
.status { flex: none; height: 16px; display: flex; align-items: center; background: #f3f2f1; border-top: 1px solid #d8d8d8; padding-left: 5px; font-size: 8px; color: #555; }
.s-page { margin-right: 13px; } .s-words { margin-right: 11px; } .s-proof { margin-right: 13px; } .s-pred { margin-right: 10px; }
.status button { gap: 2px; height: 15px; }
.right { margin-left: auto; display: flex; align-items: center; padding-right: 5px; }
.right > button:first-child { margin-right: 8px; }
.view { width: 30px; } .view.picked { background: #cdcbc9; }
.pm { width: 14px; font-size: 12px; }
.pct { margin-left: 6px; }
input[type="range"] { appearance: none; width: 75px; height: 12px; margin: 0; }
input[type="range"]::-webkit-slider-runnable-track { height: 1px; background: #888; }
input[type="range"]::-webkit-slider-thumb { appearance: none; width: 4px; height: 8px; margin-top: -4px; background: #444; }
.taskbar { flex: none; height: 30px; display: flex; background: linear-gradient(90deg, #e6eff2 0, #edf1f2 36%, #d5dfcf 42%, #d5dfcf 68%, #f0f1f1 74%, #f1f1f2); color: #222; }
.start { width: 37px; }
.bsearch { width: 214px; background: #fff; border: 1px solid #ddd; display: flex; align-items: center; gap: 8px; padding-left: 8px; font-size: 11px; }
.bsearch input { width: 170px; color: #444; }
.apps { width: 642px; margin-left: 2px; display: grid; grid-template-columns: repeat(19, 1fr); }
.apps button { position: relative; }
.run::after { content: ""; position: absolute; left: 3px; right: 4px; bottom: 0; height: 2px; background: #0b69bd; }
.word { background: #f5f8f4; } .excel { background: #dce2d8; } .teams { background: #f8b478; }
.word::after, .teams::after { left: 0; right: 0; } .teams::after { background: #d9661f; }
.mail svg { overflow: visible; }
.apps text { fill: #222; font-weight: 700; }
.apps .w { fill: #fff; } .it { font-style: italic; }
.t6 { font-size: 6px; } .t7 { font-size: 7px; } .t9 { font-size: 9px; } .t11 { font-size: 11px; }
.weather { gap: 10px; margin-left: 5px; font-size: 11px; }
.tray { margin-left: auto; display: flex; }
.tray button { width: 24px; }
.tray .pen { width: 30px; }
.clock { width: 52px; flex-direction: column; font-size: 9px; line-height: 14px; }
.note { width: 38px; border-right: 1px solid #ccc; margin-right: 2px; }
</style>
